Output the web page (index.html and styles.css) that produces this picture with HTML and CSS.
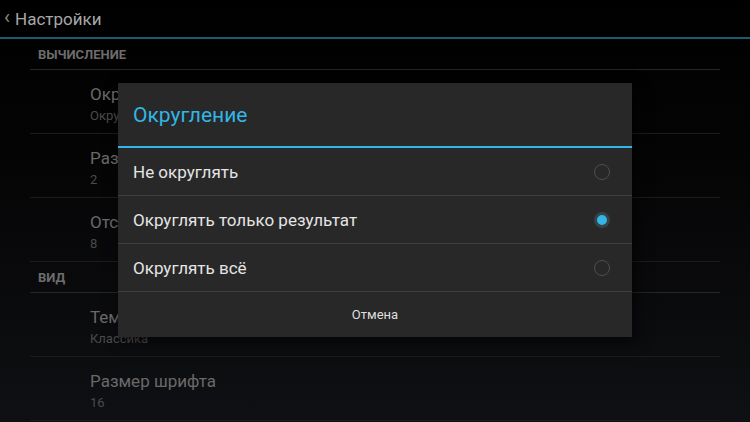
FILE: index.html
```html
<!DOCTYPE html>
<html lang="ru">

<head>
    <meta charset="UTF-8">
    <meta name="viewport" content="width=device-width, initial-scale=1.0">
    <title>Настройки</title>
    <link rel="stylesheet" href="styles.css">
</head>

<body>
    <div class="screen">
        <div class="bar">
            <span class="back">&#x2039;</span>
            <span class="bar-title">Настройки</span>
        </div>
        <ul class="prefs">
            <li class="cat">ВЫЧИСЛЕНИЕ</li>
            <li class="pref">
                <div class="pref-title">Округление</div>
                <div class="pref-sum">Округлять только результат</div>
            </li>
            <li class="pref">
                <div class="pref-title">Разрядность</div>
                <div class="pref-sum">2</div>
            </li>
            <li class="pref">
                <div class="pref-title">Отступ</div>
                <div class="pref-sum">8</div>
            </li>
            <li class="cat">ВИД</li>
            <li class="pref">
                <div class="pref-title">Тема</div>
                <div class="pref-sum">Классика</div>
            </li>
            <li class="pref">
                <div class="pref-title">Размер шрифта</div>
                <div class="pref-sum">16</div>
            </li>
        </ul>

        <div class="dialog">
            <div class="dialog-title">Округление</div>
            <ul class="choices">
                <li><span>Не округлять</span><i class="radio"></i></li>
                <li><span>Округлять только результат</span><i class="radio on"></i></li>
                <li><span>Округлять всё</span><i class="radio"></i></li>
            </ul>
            <div class="dialog-btn">Отмена</div>
        </div>
    </div>
</body>

</html>
```

FILE: styles.css
```css
body,
ul,
li {
    margin: 0;
    padding: 0;
    list-style: none;
}

body {
    background: #000;
    font-family: Roboto, "Noto Sans", sans-serif;
}

.screen {
    position: relative;
    width: 750px;
    height: 422px;
    overflow: hidden;
    background: linear-gradient(#000 0%, #050506 40%, #0f1013 100%);
}

.bar {
    height: 37px;
    display: flex;
    align-items: center;
    border-bottom: 2px solid #1d5a70;
    color: #a8a8a8;
}

.back {
    font-size: 20px;
    color: #8a8a8a;
    margin: -3px 5px 0 4px;
}

.bar-title {
    font-size: 17px;
}

.prefs {
    margin: 0 30px;
}

.cat {
    height: 30px;
    line-height: 32px;
    padding-left: 8px;
    font-size: 13px;
    font-weight: bold;
    color: #6c6c6c;
    border-bottom: 1px solid #262626;
}

.pref {
    height: 50px;
    padding: 13px 0 0 60px;
    border-bottom: 1px solid #1c1c1e;
}

.pref-title {
    font-size: 17px;
    line-height: 22px;
    color: #696969;
}

.pref-sum {
    font-size: 13px;
    line-height: 21px;
    color: #4b4b4b;
}

.dialog {
    position: absolute;
    left: 118px;
    top: 83px;
    width: 514px;
    height: 254px;
    background: #282828;
    box-shadow: 4px 4px 14px rgba(0, 0, 0, 0.6);
}

.dialog-title {
    height: 63px;
    line-height: 64px;
    padding-left: 15px;
    font-size: 21px;
    color: #33b5e5;
    border-bottom: 2px solid #33b5e5;
}

.choices li {
    height: 47px;
    display: flex;
    align-items: center;
    justify-content: space-between;
    padding: 0 22px 0 15px;
    font-size: 17px;
    color: #e4e4e4;
    border-bottom: 1px solid #3e3e3e;
}

.radio {
    width: 14px;
    height: 14px;
    border-radius: 50%;
    border: 1.5px solid #4e4e4e;
}

.radio.on {
    width: 10px;
    height: 10px;
    background: #33b5e5;
    border: 3.5px solid #364248;
}

.dialog-btn {
    height: 45px;
    line-height: 45px;
    text-align: center;
    font-size: 13px;
    color: #dedede;
}
```
